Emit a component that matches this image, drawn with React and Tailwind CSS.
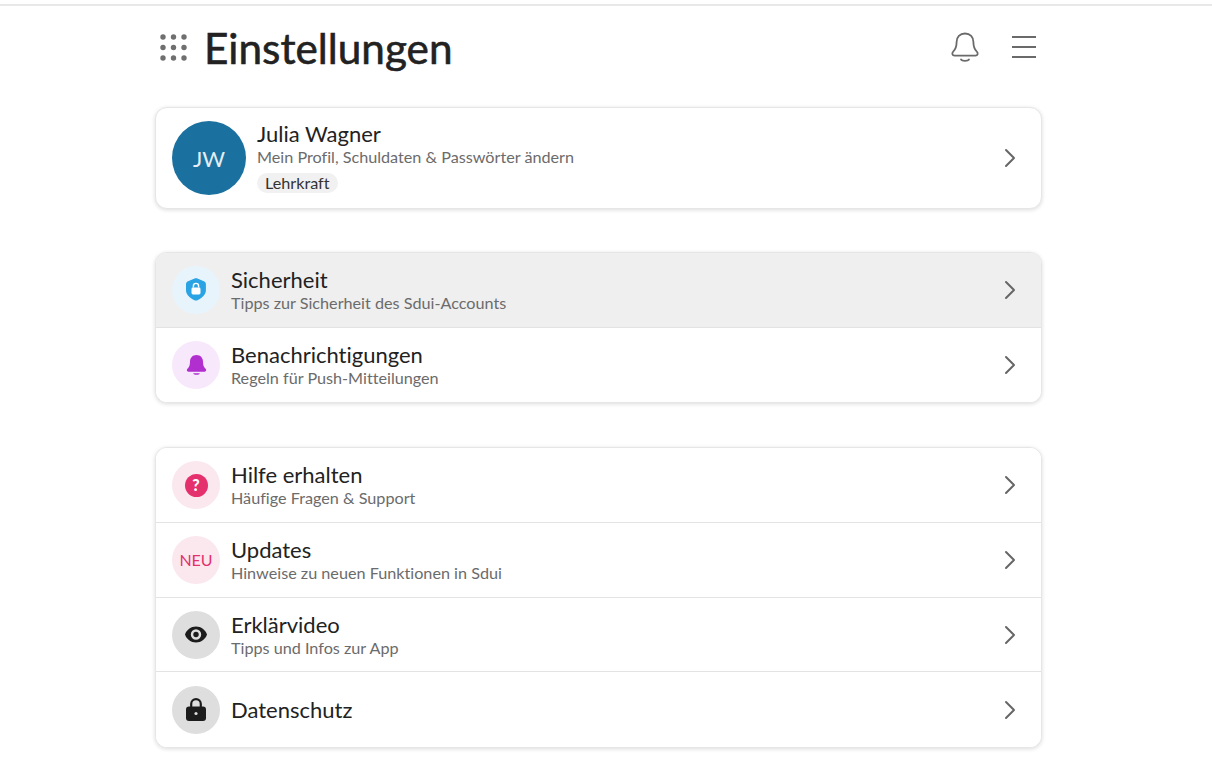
import { ChevronRight } from "lucide-react"

const font = { fontFamily: "Lato, 'Noto Sans', sans-serif", fontVariantLigatures: "none" }

function DotsIcon() {
    const dots = []
    for (let y = 0; y < 3; y++) {
        for (let x = 0; x < 3; x++) {
            dots.push(<circle key={`${x}-${y}`} cx={3 + x * 10.5} cy={3 + y * 10.5} r="2.7" fill="#6f6f6f" />)
        }
    }
    return <svg width="28" height="28" viewBox="0 0 28 28">{dots}</svg>
}

function BellOutline() {
    return (
        <svg width="30" height="32" viewBox="0 0 30 32" fill="none" stroke="#6a6a6a" strokeWidth="1.8" strokeLinejoin="round" strokeLinecap="round">
            <path d="M15 1.5c-5.2 0-8.400 3.700-8.400 8.600 0 4.500-1 7.300-3.400 9.600-1.600 1.500-1 4 1.400 4h20.800c2.400 0 3-2.500 1.400-4-2.400-2.300-3.400-5.100-3.400-9.600 0-4.900-3.200-8.600-8.400-8.600z" />
            <path d="M11 27.500c1 1.800 7 1.800 8 0" />
        </svg>
    )
}

function MenuIcon() {
    return (
        <svg width="26" height="24" viewBox="0 0 26 24" stroke="#6a6a6a" strokeWidth="2">
            <path d="M1 2h24M1 12h24M1 22h24" />
        </svg>
    )
}

function ShieldIcon() {
    return (
        <svg width="20" height="23" viewBox="0 0 20 23">
            <path d="M8.600.6c.9-.4 1.900-.4 2.800 0l6.500 2.700c1.300.5 2 1.600 2 3v6.200c0 4-4.500 8-8.400 9.800-.9.400-2.100.4-3 0C4.500 20.500 0 16.500 0 12.500V6.300c0-1.400.7-2.500 2-3z" fill="#2aa3e4" />
            <rect x="5.500" y="9.500" width="9" height="7" rx="1.400" fill="#fff" />
            <path d="M7.400 9.500V8a2.600 2.600 0 0 1 5.200 0v1.500" fill="none" stroke="#fff" strokeWidth="1.400" />
        </svg>
    )
}

function BellSolid() {
    return (
        <svg width="21" height="23" viewBox="0 0 22 24" fill="#b02fce">
            <path d="M11 1c-4.200 0-6.800 3-6.800 7 0 3.600-.9 5.700-2.700 7.500-1.100 1.100-.8 3 1 3h17c1.800 0 2.100-1.900 1-3-1.800-1.800-2.700-3.900-2.700-7.500 0-4-2.600-7-6.800-7z" />
            <path d="M7.500 20h7c-.6 2.400-6.400 2.400-7 0z" />
        </svg>
    )
}

function QuestionIcon() {
    return (
        <div className="w-[23px] h-[23px] rounded-full bg-[#e5306e] flex items-center justify-center text-white text-[16px] font-black leading-none">?</div>
    )
}

function EyeIcon() {
    return (
        <svg width="22" height="17" viewBox="0 0 22 17">
            <path fillRule="evenodd" fill="#1c1c1c" d="M11 .5c5 0 9.500 3.500 11 8-1.500 4.500-6 8-11 8S1.500 13 0 8.500C1.500 4 6 .5 11 .5zm0 2.800a5.200 5.200 0 1 0 0 10.400 5.200 5.200 0 0 0 0-10.400z" />
            <circle cx="11" cy="8.500" r="2.700" fill="#1c1c1c" />
        </svg>
    )
}

function LockIcon() {
    return (
        <svg width="20" height="23" viewBox="0 0 20 23">
            <path d="M5.200 10V6a4.800 4.800 0 0 1 9.600 0v4" fill="none" stroke="#1c1c1c" strokeWidth="2.200" />
            <rect x="0" y="8.500" width="20" height="14.500" rx="3" fill="#1c1c1c" />
            <circle cx="10" cy="15.500" r="1.600" fill="#dcdcdc" />
        </svg>
    )
}

function Chevron() {
    return <ChevronRight size={32} strokeWidth={1.500} className="text-[#666] shrink-0" />
}

function Row({ icon, circle, title, sub, active, last }) {
    return (
        <div className={`h-[74.7px] flex items-center pl-4 pr-[15px] ${active ? "bg-[#efefef]" : "bg-white"} ${last ? "" : "border-b border-[#e3e3e3]"}`}>
            <div className={`w-12 h-12 rounded-full flex items-center justify-center shrink-0 ${circle}`}>
                {icon}
            </div>
            <div className="ml-[11px] flex-1 min-w-0">
                <div className="text-[22px] leading-[26px] text-[#222]">{title}</div>
                {sub && <div className="text-[16.200px] leading-[20px] text-[#6b6b6b]">{sub}</div>}
            </div>
            <Chevron />
        </div>
    )
}

function Card({ children }) {
    return (
        <div className="rounded-xl border border-[#e6e6e6] shadow-[0_1px_4px_rgba(0,0,0,0.14)] overflow-hidden bg-white">
            {children}
        </div>
    )
}

export default function App() {
    return (
        <div className="w-[1212px] h-[782px] bg-white overflow-hidden" style={font}>
            <div className="h-[6px] border-b-2 border-[#e8e8e8]"></div>

            <div className="w-[887px] ml-[155px]">
                {/* Kopfzeile */}
                <header className="h-[101px] flex items-center pl-[5px] pr-[5px] pb-[18px]">
                    <DotsIcon />
                    <h1 className="ml-[16px] text-[42.300px] font-normal [-webkit-text-stroke:0.6px_#222] leading-none text-[#222] flex-1 pt-[1px]">Einstellungen</h1>
                    <BellOutline />
                    <div className="ml-[31px] -mt-[1px]"><MenuIcon /></div>
                </header>

                {/* Profil */}
                <Card>
                    <div className="h-[100px] flex items-center pl-4 pr-[15px]">
                        <div className="w-[74px] h-[74px] rounded-full bg-[#1a719f] flex items-center justify-center text-[#e4eef4] text-[22px] shrink-0">JW</div>
                        <div className="ml-[11px] flex-1 pb-[1px]">
                            <div className="text-[22px] leading-[26px] text-[#222]">Julia Wagner</div>
                            <div className="text-[16.200px] leading-[20px] text-[#6b6b6b]">Mein Profil, Schuldaten &amp; Passwörter ändern</div>
                            <span className="inline-block mt-[6px] px-2 rounded-full bg-[#f1f1f1] text-[16.200px] leading-[20px] text-[#333]">Lehrkraft</span>
                        </div>
                        <Chevron />
                    </div>
                </Card>

                <div className="mt-[43px]">
                    <Card>
                        <Row active icon={<ShieldIcon />} circle="bg-[#e8f4fc]" title="Sicherheit" sub="Tipps zur Sicherheit des Sdui-Accounts" />
                        <Row last icon={<BellSolid />} circle="bg-[#f7e8fb]" title="Benachrichtigungen" sub="Regeln für Push-Mitteilungen" />
                    </Card>
                </div>

                <div className="mt-[44px]">
                    <Card>
                        <Row icon={<QuestionIcon />} circle="bg-[#fbe7ee]" title="Hilfe erhalten" sub="Häufige Fragen & Support" />
                        <Row icon={<span className="text-[#e5306e] text-[16px]">NEU</span>} circle="bg-[#fbe7ee]" title="Updates" sub="Hinweise zu neuen Funktionen in Sdui" />
                        <Row icon={<EyeIcon />} circle="bg-[#dedede]" title="Erklärvideo" sub="Tipps und Infos zur App" />
                        <Row last icon={<LockIcon />} circle="bg-[#dedede]" title="Datenschutz" />
                    </Card>
                </div>
            </div>
        </div>
    )
}
